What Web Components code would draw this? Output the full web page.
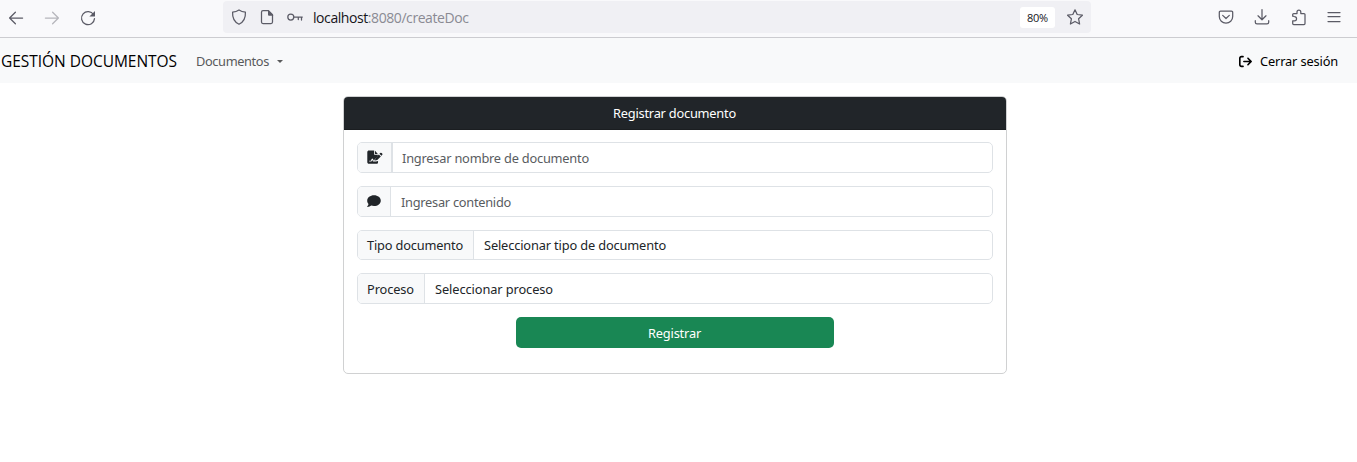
<!DOCTYPE html>
<html lang="es">
<head>
<meta charset="utf-8">
<title>Gestión documentos</title>
<style>
body{margin:0;background:#fff;color:#212529;font:12.8px/19.2px "Noto Sans","Open Sans",sans-serif;height:462px;overflow:hidden}
</style>
</head>
<body>
<browser-bar></browser-bar>
<nav-bar></nav-bar>
<doc-card>
  <fit-text slot="title" width="123">Registrar documento</fit-text>
  <input-row style="--h:31px;--addon:33px;--div:2px;--gap:9px">
    <app-icon slot="addon" name="signature" w="15.500" h="14"></app-icon>
    <fit-text width="187">Ingresar nombre de documento</fit-text>
  </input-row>
  <input-row style="--h:31px;--addon:32px">
    <app-icon slot="addon" name="comment" w="14" h="14"></app-icon>
    <fit-text width="110">Ingresar contenido</fit-text>
  </input-row>
  <input-row style="--h:30px;--addon:115px;--ink:#212529">
    <fit-text slot="addon" width="96">Tipo documento</fit-text>
    <fit-text width="182">Seleccionar tipo de documento</fit-text>
  </input-row>
  <input-row style="--h:31px;--addon:66px;--ink:#212529">
    <fit-text slot="addon" width="47">Proceso</fit-text>
    <fit-text width="118">Seleccionar proceso</fit-text>
  </input-row>
  <submit-button slot="action"><fit-text width="53">Registrar</fit-text></submit-button>
</doc-card>
<script>
const ICONS = {
  back: ['0 0 16 16', '<path d="M14.6 8H1.8M7.4 2.2 1.6 8l5.8 5.8" class="s"/>'],
  forward: ['0 0 16 16', '<path d="M1.4 8h12.8M8.6 2.2 14.4 8l-5.8 5.8" class="s"/>'],
  reload: ['0 0 16 16', '<path d="M13.6 4.8A6.5 6.5 0 1 0 14.5 8.6" class="s"/><path d="M15 1v5.1a.5.5 0 0 1-.5.5H9.4z"/>'],
  shield: ['0 0 16 16', '<path d="M8 .9c2 1.3 4.2 2 6.4 2.3.3 4.9-1.4 9.6-6.4 12-5-2.4-6.700-7.100-6.400-12C3.800 2.900 6 2.200 8 .9z" class="s"/>'],
  page: ['0 0 16 16', '<path d="M9.500 1.700H4a1.500 1.500 0 0 0-1.500 1.500v9.900A1.500 1.500 0 0 0 4 14.600h8a1.500 1.500 0 0 0 1.500-1.500V5.700z" class="s"/><path d="M9 1l5.200 5.200v.6H10A1 1 0 0 1 9 5.800z"/>'],
  key: ['0 0 16 10', '<circle cx="3.800" cy="5" r="3" class="s"/><path d="M6.800 5h8.500M11.300 5v2.500M14.500 5v3" class="s"/>'],
  star: ['0 0 16 16', '<path d="M8 .8l2.200 4.700 5.200.7-3.800 3.600 1 5.200L8 12.500l-4.600 2.500 1-5.200L.6 6.200l5.200-.7z" class="s"/>'],
  pocket: ['0 0 16 16', '<path d="M2.500 2.200h11a1.200 1.200 0 0 1 1.200 1.200V7.500a6.700 6.700 0 0 1-13.400 0V3.400a1.200 1.200 0 0 1 1.200-1.200z" class="s"/><path d="M4.700 6.400 8 9.500l3.300-3.100" class="s"/>'],
  download: ['0 0 16 16', '<path d="M8 .6v10M4 6.800l4 4 4-4M1.300 11.700v1.500a1.700 1.700 0 0 0 1.700 1.700h10a1.700 1.700 0 0 0 1.700-1.700v-1.500" class="s"/>'],
  puzzle: ['0 0 16 16', '<path d="M1.700 7.200V5.600A1 1 0 0 1 2.700 4.600h3.300V2.900a1.900 1.900 0 0 1 3.800 0v1.700h3.200a1 1 0 0 1 1 1v8.900a1 1 0 0 1-1 1H2.700a1 1 0 0 1-1-1v-2.700h1.700a2.100 2.100 0 0 0 0-4.300z" class="s"/>'],
  menu: ['0 0 12 12', '<path d="M0 1.500h12M0 5.500h12M0 10.500h12" class="s" stroke-linecap="butt"/>'],
  exit: ['0 0 512 512', '<path d="M502.600 278.600c12.500-12.500 12.500-32.800 0-45.300l-128-128c-12.500-12.500-32.800-12.500-45.300 0s-12.500 32.800 0 45.300L402.700 224 192 224c-17.700 0-32 14.300-32 32s14.300 32 32 32l210.700 0-73.400 73.400c-12.500 12.500-12.500 32.800 0 45.300s32.800 12.500 45.300 0l128-128zM160 96c17.700 0 32-14.300 32-32s-14.300-32-32-32L96 32C43 32 0 75 0 128L0 384c0 53 43 96 96 96l64 0c17.700 0 32-14.300 32-32s-14.300-32-32-32l-64 0c-17.700 0-32-14.300-32-32l0-256c0-17.700 14.300-32 32-32l64 0z"/>'],
  signature: ['0 0 16 14', '<path d="M2 .3h5.200V4a.8.800 0 0 0 .8.800h3.200V6L8.200 9l-.6 1.600H6.900L6.200 9a.8.800 0 0 0-1.400 0L4 10.800H2.300v.9h2.300l.9-1.600.700 1.600h3.100l2.100-.6v1.200c0 1-.7 1.600-1.600 1.600H2c-1 0-1.700-.7-1.700-1.600V2C.300 1 1 .3 2 .3z"/><path d="M8.100.4l3.100 3.500H8.100zM13.600 2.900a1.100 1.100 0 0 1 1.500 0l.6.6c.4.400.4 1 0 1.500l-.8.800-2.100-2.100zM12.200 4.300l2.100 2.100-3.700 3.700-2.400.6.500-2.500z"/>'],
  comment: ['0 0 14 14', '<path d="M7 1.300c3.800 0 6.800 2.400 6.800 5.400s-3 5.400-6.800 5.400c-1 0-1.900-.2-2.800-.5-1 .8-2.300 1.300-3.700 1.300-.3 0-.4-.3-.2-.6.700-.6 1.100-1.500 1.200-2.300C.700 9.100.2 8 .2 6.700c0-3 3-5.400 6.800-5.400z"/>'],
  caret: ['0 0 6 3', '<path d="M0 0h6L3 3z"/>']
};

const define = (name, html, setup) => customElements.define(name, class extends HTMLElement {
  constructor() {
    super();
    const t = document.createElement('template');
    t.innerHTML = html;
    this.attachShadow({ mode: 'open' }).append(t.content.cloneNode(true));
  }
  connectedCallback() { if (setup) setup(this); }
});

define('app-icon', `<style>:host{display:inline-flex;flex:none}svg{display:block;fill:currentColor;overflow:visible}
.s{fill:none;stroke:currentColor;stroke-width:var(--sw,1.25);stroke-linejoin:round;stroke-linecap:round}</style><svg></svg>`, el => {
  const [box, art] = ICONS[el.getAttribute('name')];
  const svg = el.shadowRoot.querySelector('svg');
  svg.setAttribute('viewBox', box);
  svg.setAttribute('width', el.getAttribute('w') || 16);
  svg.setAttribute('height', el.getAttribute('h') || 16);
  svg.innerHTML = art;
});

/* Spaces the letters so that the label takes exactly its given width. */
define('fit-text', `<style>:host{display:inline-block;flex:none;white-space:pre}span{display:inline-block}</style><span><slot></slot></span>`, el => {
  const target = +el.getAttribute('width');
  const span = el.shadowRoot.querySelector('span');
  span.style.letterSpacing = (target - span.getBoundingClientRect().width) / el.textContent.length + 'px';
  el.style.width = target + 'px';
});

define('browser-bar', `<style>
:host{display:flex;box-sizing:border-box;height:38px;background:#f9f9fb;border-bottom:1px solid #ccccd0;color:#5b5b66}
.nav{display:flex;flex:none;gap:20px;padding:10px 0 0 8px;width:223px;box-sizing:border-box}
.off{opacity:.42}
.url{display:flex;align-items:center;width:868px;height:32px;margin-top:1px;padding:0 8px;box-sizing:border-box;background:#f0f0f4;border-radius:4px}
.addr{margin-left:10px;padding-top:2px;font:14px/20px "Open Sans",sans-serif;color:#8a8a93}
b{font-weight:400;color:#15141a}
.zoom{margin-left:auto;display:flex;justify-content:center;width:35px;height:21px;background:#fff;border-radius:3px;color:#15141a;font:11px/22px "Open Sans",sans-serif}
.star{margin-left:12px}
.tools{display:flex;margin-left:auto;gap:20px;padding:9px 15px 0 0}
</style>
<div class="nav"><app-icon name="back"></app-icon><app-icon class="off" name="forward"></app-icon><app-icon name="reload"></app-icon></div>
<div class="url"><app-icon name="shield"></app-icon><app-icon name="page" style="margin-left:12px"></app-icon><app-icon name="key" h="10" style="margin-left:12px"></app-icon>
<div class="addr"><fit-text width="155.500"><b>localhost</b>:8080/createDoc</fit-text></div>
<div class="zoom"><fit-text width="21">80%</fit-text></div><app-icon class="star" name="star"></app-icon></div>
<div class="tools"><app-icon name="pocket"></app-icon><app-icon name="download"></app-icon><app-icon name="puzzle" style="margin-left:1px"></app-icon><app-icon name="menu" w="12" h="12" style="padding:2px;margin-left:-1px"></app-icon></div>`);

define('nav-bar', `<style>
:host{display:flex;align-items:center;box-sizing:border-box;height:45px;padding:1px 19px 0 1px;background:#f8f9fa;color:#000}
.brand{font:15.5px/24px "Open Sans",sans-serif}
.link{display:flex;align-items:center;padding-top:1px;margin-left:19px;color:#595a5b}
.out{display:flex;align-items:center;padding-top:1px;margin-left:auto}
</style>
<div class="brand"><fit-text width="176">GESTIÓN DOCUMENTOS</fit-text></div>
<div class="link"><fit-text width="73">Documentos</fit-text><app-icon name="caret" w="6" h="3" style="margin-left:8px"></app-icon></div>
<div class="out"><app-icon name="exit" w="13" h="13" style="margin-right:8px"></app-icon><fit-text width="78">Cerrar sesión</fit-text></div>`);

define('doc-card', `<style>
:host{display:flex;flex-direction:column;box-sizing:border-box;width:664px;height:278px;margin:13px 0 0 343px;border:1px solid #d0d1d2;border-radius:5px;overflow:hidden;background:#fff}
header{display:flex;justify-content:center;box-sizing:border-box;height:33px;flex:none;padding:7px 1px 0 0;background:#212529;border-bottom:1px solid #1b1e21;color:#fff}
.body{display:flex;flex-direction:column;gap:13px;padding:12px 13px}
.foot{display:flex;justify-content:center}
</style><header><slot name="title"></slot></header><div class="body"><slot></slot><div class="foot"><slot name="action"></slot></div></div>`);

define('input-row', `<style>
:host{display:flex;box-sizing:border-box;height:var(--h);border:1px solid #dee2e6;border-radius:5px;overflow:hidden}
.addon,.field{display:flex;align-items:center}
.addon{width:calc(var(--addon) - 9px);padding-left:9px;background:#f8f9fa;border-right:var(--div,1px) solid #dee2e6}
.field{padding-left:var(--gap,10px);color:var(--ink,#595c5f)}
::slotted(fit-text){padding-top:2px}
::slotted(app-icon){padding-bottom:1px}
</style><div class="addon"><slot name="addon"></slot></div><div class="field"><slot></slot></div>`);

define('submit-button', `<style>:host{display:flex;align-items:center;justify-content:center;box-sizing:border-box;width:318px;height:31px;padding:2px 1px 0 0;border-radius:5px;background:#198754;color:#fff}</style><slot></slot>`);
</script>
</body>
</html>
